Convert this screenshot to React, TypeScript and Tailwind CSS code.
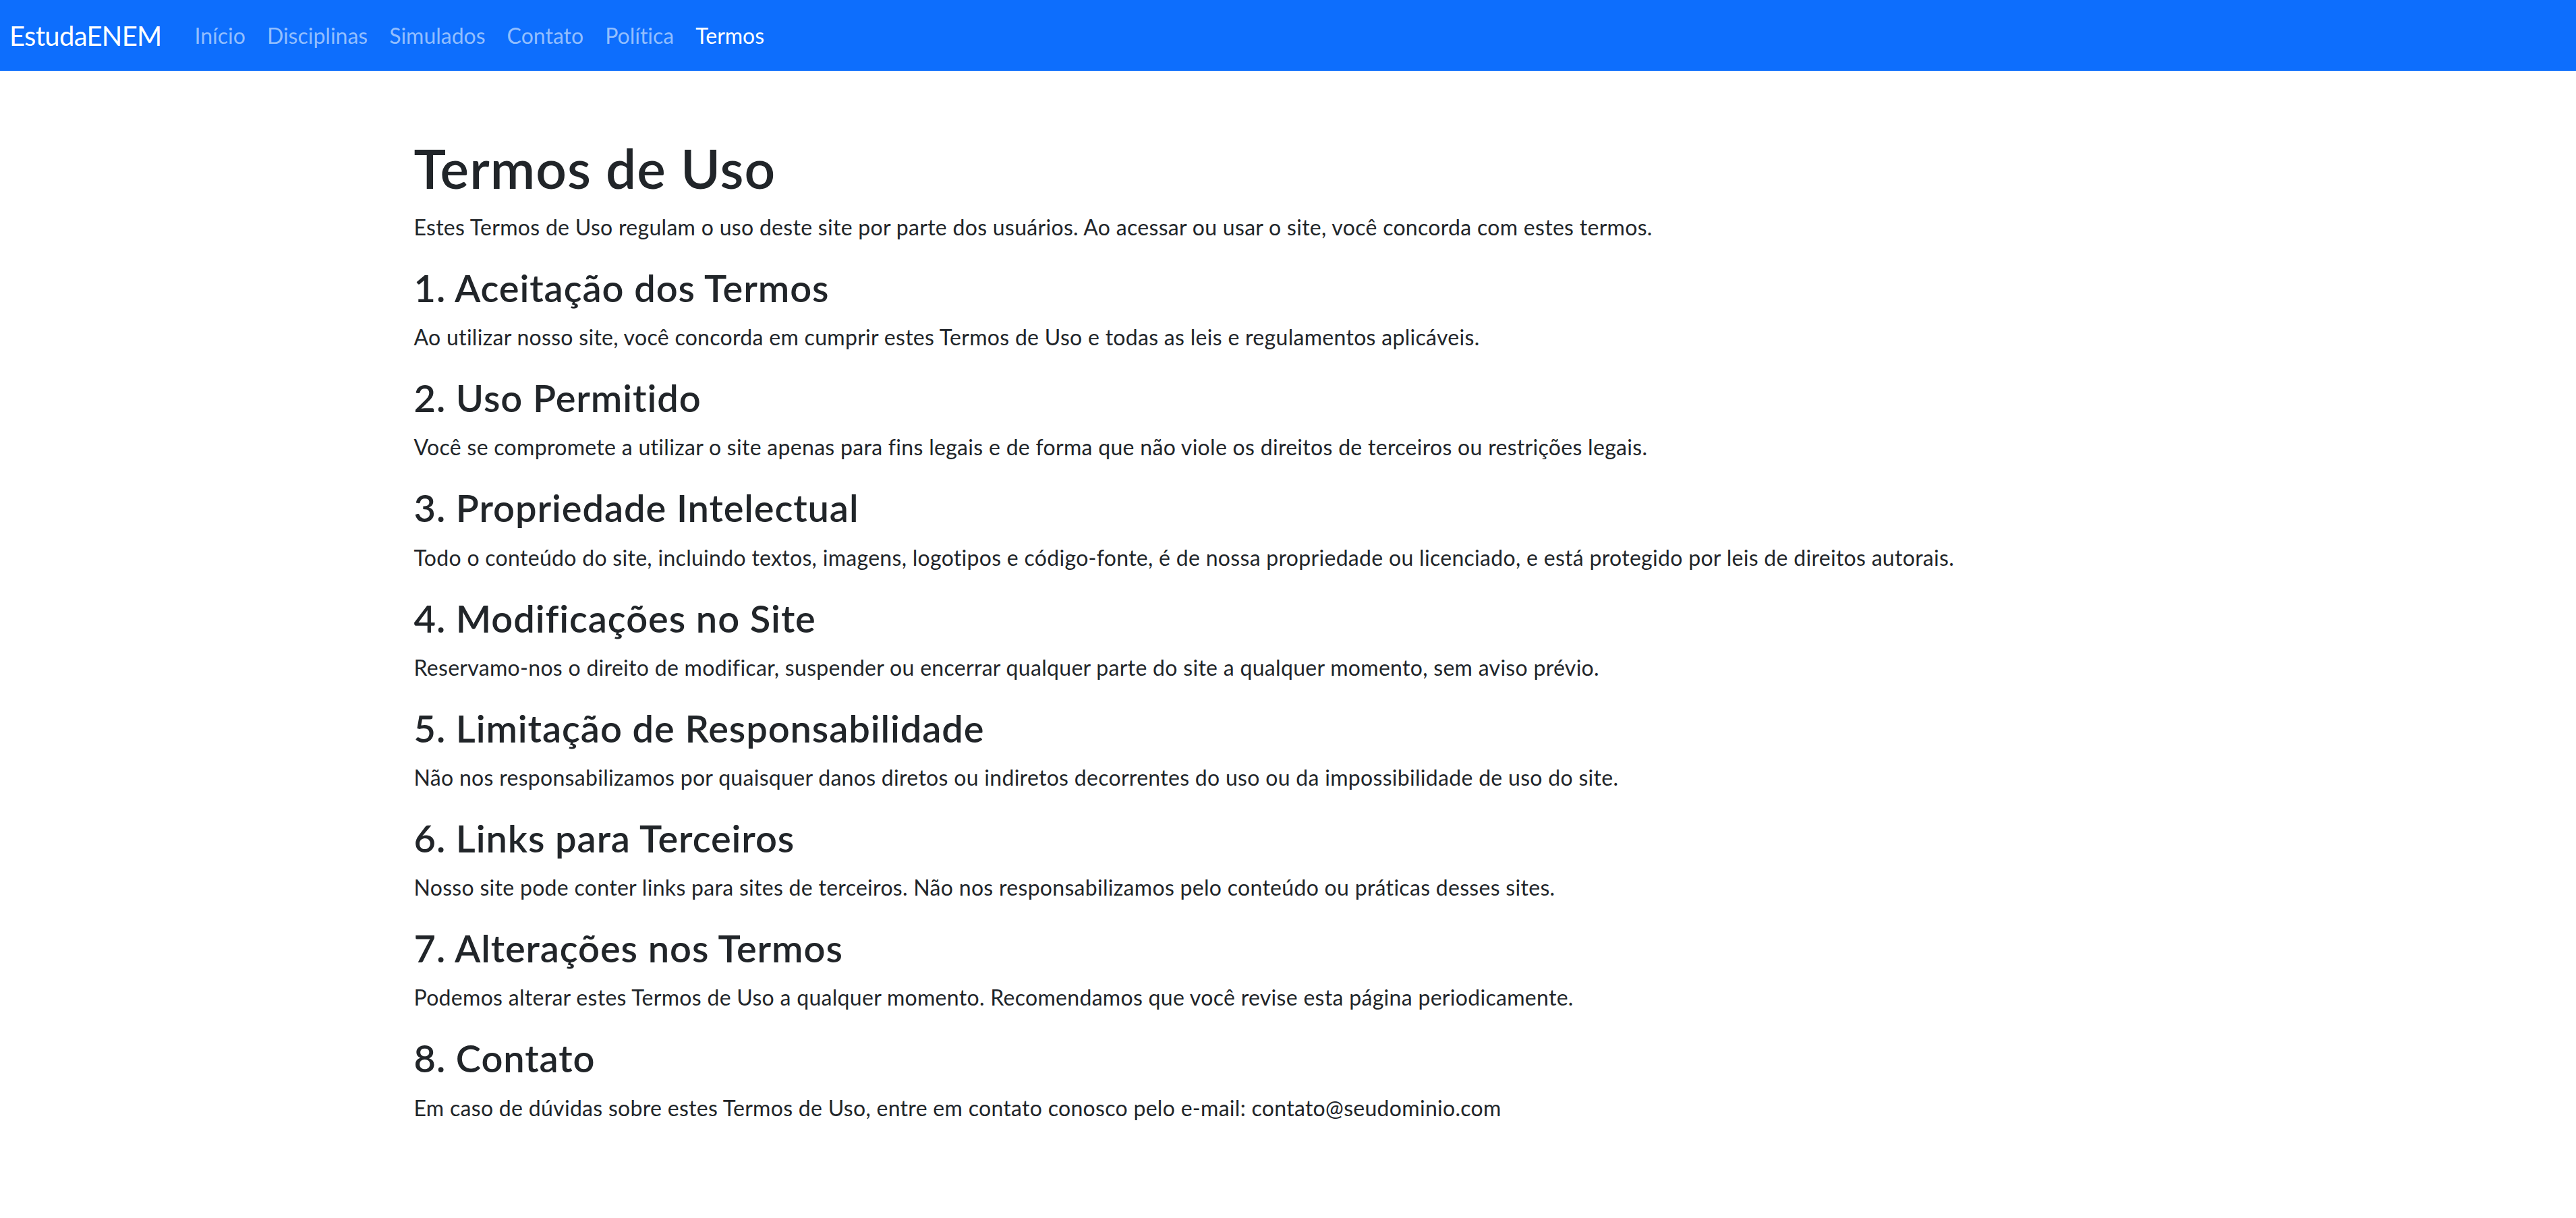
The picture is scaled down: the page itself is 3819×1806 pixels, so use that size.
const links = ['Início', 'Disciplinas', 'Simulados', 'Contato', 'Política']

const sections = [
  {
    title: '1. Aceitação dos Termos',
    body: 'Ao utilizar nosso site, você concorda em cumprir estes Termos de Uso e todas as leis e regulamentos aplicáveis.',
  },
  {
    title: '2. Uso Permitido',
    body: 'Você se compromete a utilizar o site apenas para fins legais e de forma que não viole os direitos de terceiros ou restrições legais.',
  },
  {
    title: '3. Propriedade Intelectual',
    body: 'Todo o conteúdo do site, incluindo textos, imagens, logotipos e código-fonte, é de nossa propriedade ou licenciado, e está protegido por leis de direitos autorais.',
  },
  {
    title: '4. Modificações no Site',
    body: 'Reservamo-nos o direito de modificar, suspender ou encerrar qualquer parte do site a qualquer momento, sem aviso prévio.',
  },
  {
    title: '5. Limitação de Responsabilidade',
    body: 'Não nos responsabilizamos por quaisquer danos diretos ou indiretos decorrentes do uso ou da impossibilidade de uso do site.',
  },
  {
    title: '6. Links para Terceiros',
    body: 'Nosso site pode conter links para sites de terceiros. Não nos responsabilizamos pelo conteúdo ou práticas desses sites.',
  },
  {
    title: '7. Alterações nos Termos',
    body: 'Podemos alterar estes Termos de Uso a qualquer momento. Recomendamos que você revise esta página periodicamente.',
  },
  {
    title: '8. Contato',
    body: 'Em caso de dúvidas sobre estes Termos de Uso, entre em contato conosco pelo e-mail: contato@seudominio.com',
  },
]

function Navbar() {
  return (
    <nav className="flex h-[105px] items-center bg-[#0d6efd] pl-[14px]">
      <a href="#" className="mr-[33px] text-[40px] leading-[60px] tracking-[-0.7px] text-white">
        EstudaENEM
      </a>
      <ul className="flex items-center">
        {links.map((label) => (
          <li key={label}>
            <a href="#" className="block px-4 text-[32px] leading-[48px] text-[#92befe]">
              {label}
            </a>
          </li>
        ))}
        <li>
          <a href="#" className="block px-4 text-[32px] leading-[48px] text-white">
            Termos
          </a>
        </li>
      </ul>
    </nav>
  )
}

export default function App() {
  return (
    <div className="min-h-screen bg-white font-['Lato',sans-serif] text-[#212529] [font-variant-ligatures:none]">
      <Navbar />
      <main className="mx-auto mt-24 max-w-[2640px] px-6">
        <h1 className="mb-4 text-[80px] leading-[96px] font-semibold tracking-[1.1px]">
          Termos de Uso
        </h1>
        <p className="mb-8 text-[32px] leading-[48px] tracking-[0.3px]">
          Estes Termos de Uso regulam o uso deste site por parte dos usuários. Ao acessar ou usar o
          site, você concorda com estes termos.
        </p>
        {sections.map((s) => (
          <section key={s.title}>
            <h3 className="mb-4 text-[56px] leading-[67.2px] font-semibold tracking-[0.9px]">
              {s.title}
            </h3>
            <p className="mb-8 text-[32px] leading-[48px] tracking-[0.3px]">{s.body}</p>
          </section>
        ))}
      </main>
    </div>
  )
}
